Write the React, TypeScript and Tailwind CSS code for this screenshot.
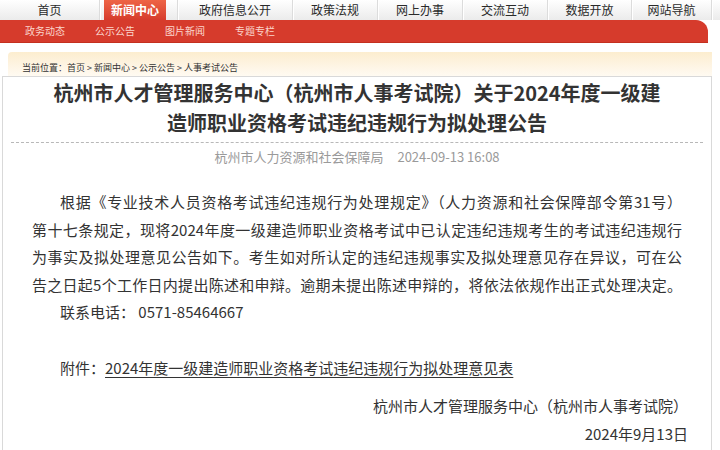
import React from 'react'

const topNav = [
  { label: '首页', cls: 'w-[100px]' },
  { label: '新闻中心', cls: 'w-[78px]', active: true },
  { label: '政府信息公开', cls: 'w-[115px]' },
  { label: '政策法规', cls: 'w-[85px]' },
  { label: '网上办事', cls: 'w-[85px]' },
  { label: '交流互动', cls: 'w-[85px]' },
  { label: '数据开放', cls: 'w-[84px]' },
  { label: '网站导航', cls: 'w-[80px]' },
]

const subNav = ['政务动态', '公示公告', '图片新闻', '专题专栏']

// each body line is laid out on its own so the breaks match the page
const bodyLines = [
  '根据《专业技术人员资格考试违纪违规行为处理规定》（人力资源和社会保障部令第31号）',
  '第十七条规定，现将2024年度一级建造师职业资格考试中已认定违纪违规考生的考试违纪违规行',
  '为事实及拟处理意见公告如下。考生如对所认定的违纪违规事实及拟处理意见存在异议，可在公',
  '告之日起5个工作日内提出陈述和申辩。逾期未提出陈述申辩的，将依法依规作出正式处理决定。',
]

export default function App() {
  return (
    <div className="w-[720px] h-[450px] overflow-hidden bg-white font-['Noto_Sans_CJK_SC',sans-serif] text-[#333]">
      {/* Top navigation */}
      <div className="flex h-[20px] bg-linear-to-b from-white to-[#ebebeb]">
        {topNav.map((item) => (
          <div
            key={item.label}
            className={`${item.cls} h-full flex items-center justify-center border-r border-[#dcdcdc] shadow-[1px_0_0_#fff]`}
          >
            {item.active ? (
              <div className="ml-[4px] mr-[11px] w-full h-full flex items-center justify-center bg-linear-to-b from-[#ee6446] to-[#d63b2c] text-white font-bold text-[12px] leading-none">
                {item.label}
              </div>
            ) : (
              <span className="text-[12px] leading-none text-[#2a2a2a]">{item.label}</span>
            )}
          </div>
        ))}
      </div>

      {/* Red sub navigation */}
      <div className="flex items-center gap-[30px] w-[708px] h-[23px] pl-[25px] bg-[#d63b2c] rounded-tr-[12px] border-b border-[#c4301f]">
        {subNav.map((s) => (
          <span key={s} className="text-[10px] leading-none text-[#fbd6cc]">
            {s}
          </span>
        ))}
      </div>

      {/* Breadcrumb */}
      <div className="mt-[9px] ml-[8px] w-[704px] h-[24px] pl-[14px] pt-[10px] rounded-tl-[4px] bg-linear-to-b from-[#fcedcf] to-[#fffaf2] text-[9px] leading-[12px] text-[#333]">
        当前位置：首页 &gt; 新闻中心 &gt; 公示公告 &gt; 人事考试公告
      </div>

      {/* Article */}
      <div className="ml-[2px] w-[710px] h-[400px] border border-b-0 border-[#d9d9d9]">
        <div className="pt-[1px] text-center text-[20px] leading-[30px] font-bold text-[#333]">
          <div>杭州市人才管理服务中心（杭州市人事考试院）关于2024年度一级建</div>
          <div>造师职业资格考试违纪违规行为拟处理公告</div>
        </div>
        <div className="mx-[8px] mt-[4px] border-t border-dashed border-[#b8b8b8]" />
        <div className="mt-[6px] flex justify-center gap-[14px] text-[13px] leading-[16px] text-[#9a9a9a]">
          <span>杭州市人力资源和社会保障局</span>
          <span>2024-09-13 16:08</span>
        </div>

        <div className="mt-[23px] px-[29px] text-[15px] leading-[27.5px] text-[#333]">
          {bodyLines.map((line, i) => (
            <div
              key={i}
              className={`whitespace-nowrap text-justify [text-align-last:justify] ${i === 0 ? 'pl-[28px]' : ''}`}
            >
              {line}
            </div>
          ))}
          <div className="pl-[28px]">联系电话： 0571-85464667</div>
          <div className="pl-[28px] mt-[28.5px]">
            附件：<span className="underline underline-offset-[3px]">2024年度一级建造师职业资格考试违纪违规行为拟处理意见表</span>
          </div>
          <div className="mt-[10.5px] -mr-[6px] text-right">杭州市人才管理服务中心（杭州市人事考试院）</div>
          <div className="-mr-[6px] text-right">2024年9月13日</div>
        </div>
      </div>
    </div>
  )
}
